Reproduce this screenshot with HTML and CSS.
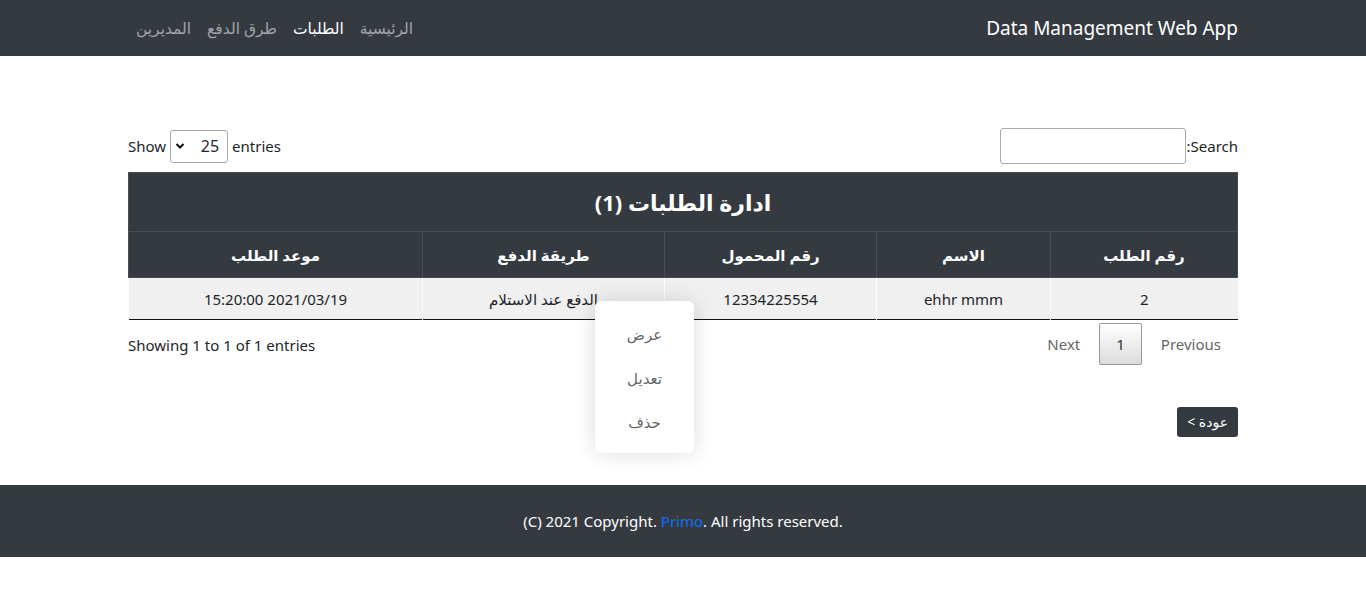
FILE: index.html
```html
<!DOCTYPE html>
<html lang="ar" dir="rtl">
<head>
  <meta charset="UTF-8" />
  <meta name="viewport" content="width=device-width, initial-scale=1.0"/>
  <title>Data Management Web App | الطلبات</title>
  <link rel="stylesheet" href="styles.css">
</head>
<body>
<nav class="navbar">
  <div class="container nav-inner">
    <a href="#" class="brand">Data Management Web App</a>
    <ul class="nav-links">
      <li><a href="#">الرئيسية</a></li>
      <li><a href="#" class="active">الطلبات</a></li>
      <li><a href="#">طرق الدفع</a></li>
      <li><a href="#">المديرين</a></li>
    </ul>
  </div>
</nav>

<main class="container page">
  <div class="dt-top">
    <label class="dt-search">Search:<input type="search"></label>
    <label class="dt-length" dir="ltr">Show
      <span class="select-wrap">
        <select dir="rtl">
          <option>10</option>
          <option selected>25</option>
          <option>50</option>
          <option>100</option>
        </select>
        <svg class="chev" width="10" height="8" viewBox="0 0 10 8"><path d="M1.5 2 5 5.5 8.5 2" fill="none" stroke="#111" stroke-width="2"/></svg>
      </span>
      entries
    </label>
  </div>

  <table class="orders">
    <thead>
      <tr><th colspan="5" class="caption">ادارة الطلبات (1)</th></tr>
      <tr>
        <th class="c1">رقم الطلب</th>
        <th class="c2">الاسم</th>
        <th class="c3">رقم المحمول</th>
        <th class="c4">طريقة الدفع</th>
        <th class="c5">موعد الطلب</th>
      </tr>
    </thead>
    <tbody>
      <tr>
        <td>2</td>
        <td>ehhr mmm</td>
        <td>12334225554</td>
        <td>الدفع عند الاستلام</td>
        <td>2021/03/19 15:20:00</td>
      </tr>
    </tbody>
  </table>

  <div class="dt-bottom">
    <div class="pager">
      <a class="pg-btn disabled">Previous</a>
      <a class="pg-btn current">1</a>
      <a class="pg-btn disabled">Next</a>
    </div>
    <div class="dt-info" dir="ltr">Showing 1 to 1 of 1 entries</div>
  </div>

  <div class="back-row">
    <a href="#" class="back-btn">عودة &gt;</a>
  </div>

  <div class="row-menu">
    <a href="#">عرض</a>
    <a href="#">تعديل</a>
    <a href="#">حذف</a>
  </div>
</main>

<footer class="footer">
  <p dir="ltr">(C) 2021 Copyright. <a href="#">Primo</a>. All rights reserved.</p>
</footer>
</body>
</html>
```

FILE: styles.css
```css
* { margin: 0; padding: 0; box-sizing: border-box; }
html, body {
  font-family: "Segoe UI", "Noto Sans", "DejaVu Sans", sans-serif;
  font-size: 15px;
  color: #212529;
  background: #fff;
}
a { text-decoration: none; }

.container {
  width: 1140px;
  margin: 0 auto;
  padding: 0 15px;
}

/* navbar */
.navbar {
  background: #343a40;
  height: 56px;
}
.nav-inner {
  display: flex;
  justify-content: space-between;
  align-items: center;
  height: 100%;
}
.brand {
  color: #fff;
  font-size: 19px;
}
.nav-links {
  list-style: none;
  display: flex;
}
.nav-links a {
  display: block;
  padding: 8px;
  font-size: 15.5px;
  color: rgba(255, 255, 255, 0.55);
}
.nav-links a.active { color: #fff; }

/* page */
.page {
  position: relative;
  padding-top: 72px;
  padding-bottom: 48px;
}
.dt-top {
  display: flex;
  justify-content: space-between;
  align-items: center;
  margin-bottom: 8px;
}
.dt-search {
  display: flex;
  align-items: center;
}
.dt-search input {
  width: 186px;
  height: 36px;
  border: 1px solid #aaa;
  border-radius: 3px;
  padding: 4px;
  font: inherit;
}
.dt-length {
  display: flex;
  align-items: center;
  gap: 4px;
}
.select-wrap {
  position: relative;
  display: inline-block;
}
.select-wrap select {
  -webkit-appearance: none;
  appearance: none;
  width: 58px;
  height: 33px;
  border: 1px solid #aaa;
  border-radius: 3px;
  background: #fff;
  font: inherit;
  font-size: 16px;
  color: #212529;
  padding: 0 8px 0 24px;
}
.chev {
  position: absolute;
  left: 5px;
  top: 12px;
  pointer-events: none;
}

/* table */
.orders {
  width: 100%;
  border-collapse: collapse;
  border-bottom: 1px solid #111;
}
.orders th {
  background: #343a40;
  color: #fff;
  border: 1px solid #454d55;
  font-weight: bold;
  height: 46px;
}
.orders th.caption {
  font-size: 22px;
  height: 59px;
}
.orders th.c1 { width: 187px; }
.orders th.c2 { width: 174px; }
.orders th.c3 { width: 212px; }
.orders th.c4 { width: 242px; }
.orders td {
  background: #f0f0f0;
  border-left: 1px solid #fbfbfb;
  text-align: center;
  height: 42px;
}

.dt-bottom {
  display: flex;
  justify-content: space-between;
  align-items: center;
  margin-top: 3px;
}
.pager {
  display: flex;
  align-items: center;
  gap: 2px;
}
.pg-btn {
  display: block;
  padding: 10px 16px;
  color: #666;
  border: 1px solid transparent;
  border-radius: 2px;
}
.pg-btn.current {
  color: #333;
  border-color: #979797;
  background: linear-gradient(to bottom, #fff 0%, #dcdcdc 100%);
}
.dt-info { padding-top: 2px; }

.back-row {
  display: flex;
  margin-top: 42px;
}
.back-btn {
  display: block;
  background: #343a40;
  color: #fff;
  font-size: 14px;
  line-height: 20px;
  padding: 5px 10px;
  border-radius: 3px;
}

.row-menu {
  position: absolute;
  left: 482px;
  top: 245px;
  width: 99px;
  height: 152px;
  background: #fff;
  border-radius: 6px;
  box-shadow: 0 0 22px rgba(0, 0, 0, 0.14);
  display: flex;
  flex-direction: column;
  align-items: center;
  padding-top: 20px;
}
.row-menu a {
  color: #666;
  height: 44px;
  line-height: 26px;
}

/* footer */
.footer {
  background: #343a40;
  color: #fff;
  height: 72px;
  display: flex;
  align-items: center;
  justify-content: center;
}
.footer a { color: #0d6efd; }
```
